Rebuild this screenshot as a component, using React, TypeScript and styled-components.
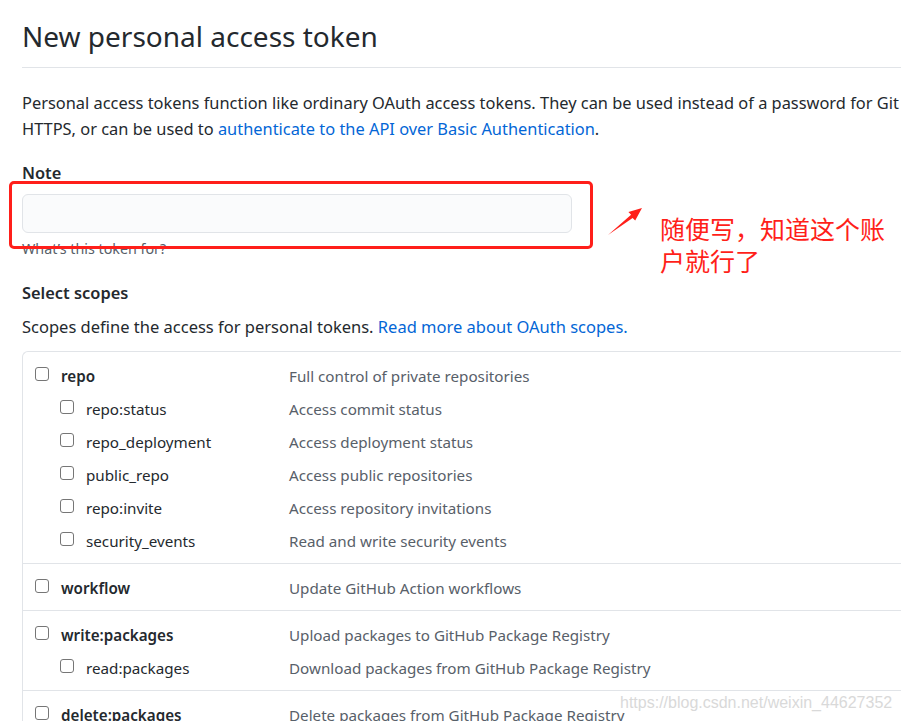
import React from 'react';
import styled, {createGlobalStyle} from 'styled-components';

const GlobalStyle = createGlobalStyle`
  html, body {
    margin: 0;
    padding: 0;
    background: #ffffff;
    overflow: hidden;
  }
  body {
    font-family: "Noto Sans", "Open Sans", sans-serif;
    color: #24292e;
  }
`;

const textColor = '#24292e';
const mutedColor = '#586069';
const linkColor = '#0366d6';
const borderColor = '#e1e4e8';
const markRed = '#ff1f1a';

const Page = styled.div`
  position: relative;
  width: 1040px;
  height: 721px;
  padding-left: 22px;
  overflow: hidden;
  box-sizing: border-box;
`;

const Subhead = styled.div`
  padding-top: 14px;
  padding-bottom: 9px;
  border-bottom: 1px solid ${borderColor};
`;

const Title = styled.h2`
  margin: 0;
  font-size: 28px;
  line-height: 44px;
  font-weight: 400;
  color: ${textColor};
`;

const Lead = styled.p`
  margin: 22px 0 0;
  font-size: 16.4px;
  line-height: 26px;
  white-space: nowrap;
`;

const Link = styled.a`
  color: ${linkColor};
  text-decoration: none;
`;

const Label = styled.div<{top: number}>`
  margin-top: ${({top}) => top}px;
  font-size: 16.4px;
  line-height: 26px;
  font-weight: 600;
`;

const NoteInput = styled.input`
  display: block;
  margin-top: 8px;
  width: 550px;
  height: 39px;
  box-sizing: border-box;
  background: #fafbfc;
  border: 1px solid ${borderColor};
  border-radius: 6px;
  outline: none;
  font-size: 16px;
`;

const Hint = styled.div`
  margin-top: 6px;
  font-size: 14.3px;
  line-height: 20px;
  color: ${mutedColor};
`;

const ScopeIntro = styled.p`
  margin: 8px 0 0;
  font-size: 16.5px;
  line-height: 26px;
`;

const ScopeTable = styled.div`
  margin-top: 11px;
  border-top: 1px solid ${borderColor};
  border-left: 1px solid ${borderColor};
  border-top-left-radius: 6px;
`;

const Group = styled.div`
  padding: 7px 0 6px 12px;
  border-bottom: 1px solid ${borderColor};
`;

const Item = styled.label`
  display: grid;
  grid-template-columns: 254px 1fr;
  height: 33px;
  align-items: center;
  font-size: 15.2px;
`;

const NameCell = styled.span<{sub?: boolean}>`
  display: flex;
  align-items: center;
  gap: 12px;
  padding-left: ${({sub}) => (sub ? '25px' : '0')};
  font-weight: ${({sub}) => (sub ? 400 : 600)};
  color: ${textColor};
`;

const Check = styled.input`
  appearance: none;
  margin: 0;
  width: 14px;
  height: 14px;
  border: 1px solid #767676;
  border-radius: 3px;
  background: #fff;
  box-sizing: border-box;
  flex: none;
  position: relative;
  top: -2px;
`;

const Desc = styled.span`
  color: ${mutedColor};
`;

const MarkBox = styled.div`
  position: absolute;
  left: 9px;
  top: 181px;
  width: 584px;
  height: 68px;
  box-sizing: border-box;
  border: 3px solid ${markRed};
  border-radius: 5px;
`;

const MarkArrow = styled.svg`
  position: absolute;
  left: 604px;
  top: 204px;
`;

const MarkText = styled.div`
  position: absolute;
  left: 660px;
  top: 212px;
  width: 232px;
  font-family: "Noto Sans CJK SC", sans-serif;
  font-size: 25px;
  line-height: 32px;
  color: ${markRed};
`;

const Watermark = styled.div`
  position: absolute;
  left: 620px;
  top: 692px;
  font-family: "Liberation Sans", Arial, sans-serif;
  font-size: 16px;
  line-height: 22px;
  color: #d9d9d9;
  text-shadow: 0 0 1px #fff;
  pointer-events: none;
`;

type Scope = {name: string; desc: string; children?: {name: string; desc: string}[]};

const scopes: Scope[] = [
  {
    name: 'repo',
    desc: 'Full control of private repositories',
    children: [
      {name: 'repo:status', desc: 'Access commit status'},
      {name: 'repo_deployment', desc: 'Access deployment status'},
      {name: 'public_repo', desc: 'Access public repositories'},
      {name: 'repo:invite', desc: 'Access repository invitations'},
      {name: 'security_events', desc: 'Read and write security events'},
    ],
  },
  {name: 'workflow', desc: 'Update GitHub Action workflows'},
  {
    name: 'write:packages',
    desc: 'Upload packages to GitHub Package Registry',
    children: [{name: 'read:packages', desc: 'Download packages from GitHub Package Registry'}],
  },
  {name: 'delete:packages', desc: 'Delete packages from GitHub Package Registry'},
  {
    name: 'admin:org',
    desc: 'Full control of orgs and teams, read and write org projects',
  },
];

export default function App() {
  return (
    <Page>
      <GlobalStyle />
      <Subhead>
        <Title>New personal access token</Title>
      </Subhead>
      <Lead>
        Personal access tokens function like ordinary OAuth access tokens. They can be used instead of a
        password for Git over
        <br />
        HTTPS, or can be used to <Link href="#">authenticate to the API over Basic Authentication</Link>.
      </Lead>

      <Label top={18}>Note</Label>
      <NoteInput type="text" />
      <Hint>What’s this token for?</Hint>

      <Label top={21}>Select scopes</Label>
      <ScopeIntro>
        Scopes define the access for personal tokens. <Link href="#">Read more about OAuth scopes.</Link>
      </ScopeIntro>

      <ScopeTable>
        {scopes.map((scope) => (
          <Group key={scope.name}>
            <Item>
              <NameCell>
                <Check type="checkbox" />
                {scope.name}
              </NameCell>
              <Desc>{scope.desc}</Desc>
            </Item>
            {scope.children?.map((child) => (
              <Item key={child.name}>
                <NameCell sub>
                  <Check type="checkbox" />
                  {child.name}
                </NameCell>
                <Desc>{child.desc}</Desc>
              </Item>
            ))}
          </Group>
        ))}
      </ScopeTable>

      <MarkBox />
      <MarkArrow width="42" height="36" viewBox="0 0 42 36">
        <polygon
          points="4,31 28.6,13.9 31.2,16.6 38,4 24.4,7.9 27.1,10.8"
          fill={markRed}
        />
      </MarkArrow>
      <MarkText>随便写，知道这个账户就行了</MarkText>
      <Watermark>https://blog.csdn.net/weixin_44627352</Watermark>
    </Page>
  );
}
